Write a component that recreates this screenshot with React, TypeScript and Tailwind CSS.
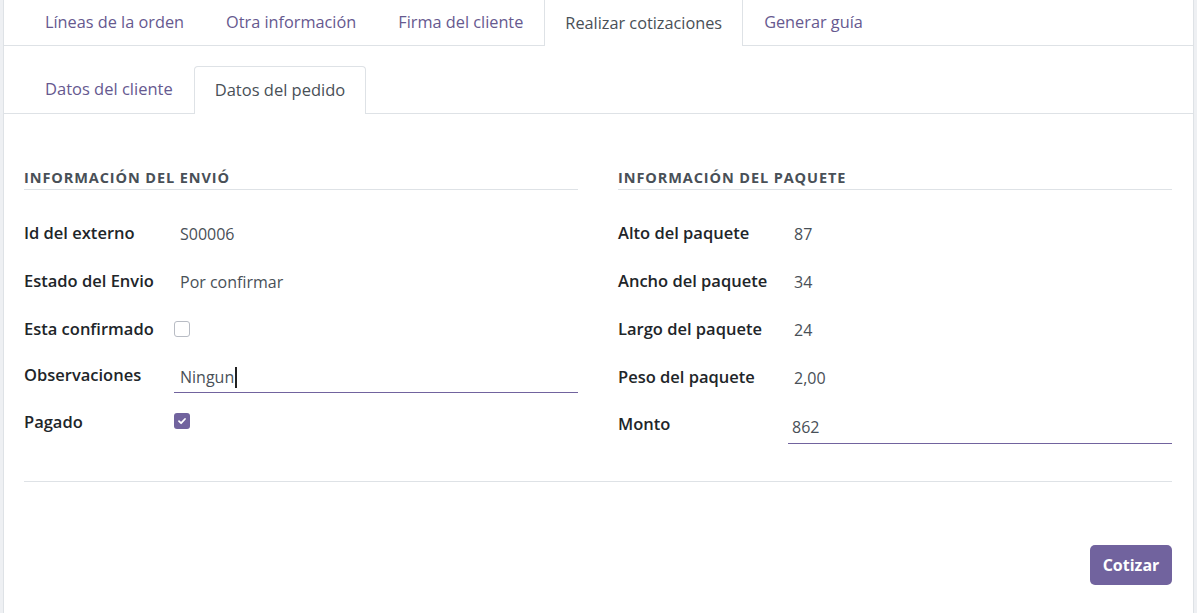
import React from "react";

const FONT = { fontFamily: '"Open Sans", "Noto Sans", sans-serif' };

function Check() {
  return (
    <span className="flex h-4 w-4 items-center justify-center rounded-[3px] bg-[#71639e]">
      <svg width="10" height="10" viewBox="0 0 10 10" fill="none">
        <path d="M2 5.2 L4.1 7.2 L8 3" stroke="white" strokeWidth="1.8" strokeLinecap="round" strokeLinejoin="round" />
      </svg>
    </span>
  );
}

function Row({ label, labelW, h = "h-[47.5px]", children }: { label: string; labelW: string; h?: string; children: React.ReactNode }) {
  return (
    <div className={`flex ${h} items-start`}>
      <div className={`${labelW} shrink-0 text-[16.5px] font-semibold leading-6 text-[#212529]`}>{label}</div>
      <div className="flex-1">{children}</div>
    </div>
  );
}

function Value({ children }: { children: React.ReactNode }) {
  return <div className="pl-[6px] pt-[1px] text-[16px] leading-6 text-[#495057]">{children}</div>;
}

export default function App() {
  const topTabs = ["Líneas de la orden", "Otra información", "Firma del cliente", "Realizar cotizaciones", "Generar guía"];
  return (
    <div className="h-[613px] w-[1197px] overflow-hidden bg-[#eef0f3] px-[3px]" style={FONT}>
      <div className="h-full border-x border-[#dee2e6] bg-white">
        {/* top tabs */}
        <div className="flex h-[46px] border-b border-[#dee2e6] pl-[20px]">
          {topTabs.map((t) => {
            const active = t === "Realizar cotizaciones";
            return (
              <div
                key={t}
                className={
                  active
                    ? "-mb-px flex h-[46px] items-center border-x border-[#dee2e6] bg-white px-5 text-[16.3px] text-[#495057]"
                    : "flex h-[45px] items-center border-x border-transparent px-5 text-[16.3px] text-[#66598f]"
                }
              >
                {t}
              </div>
            );
          })}
        </div>

        {/* sub tabs */}
        <div className="flex h-[68px] items-end border-b border-[#dee2e6] pl-[20px]">
          <div className="flex h-[47px] items-center border border-transparent px-5 text-[16.5px] text-[#66598f]">
            Datos del cliente
          </div>
          <div className="-mb-px flex h-[48px] items-center rounded-t-[4px] border border-b-0 border-[#dee2e6] bg-white px-5 text-[16.5px] text-[#495057]">
            Datos del pedido
          </div>
        </div>

        <div className="pl-[20px] pr-[21px] pt-[54px]">
          <div className="grid grid-cols-2 gap-10">
            {/* left */}
            <div>
              <div className="border-b border-[#dee2e6] pb-[1px] text-[14.5px] font-bold uppercase leading-5 tracking-[0.9px] text-[#495057]">
                Información del envió
              </div>
              <div className="pt-[31px]">
                <Row label="Id del externo" labelW="w-[150px]" h="h-[48px]">
                  <Value>S00006</Value>
                </Row>
                <Row label="Estado del Envio" labelW="w-[150px]" h="h-[48px]">
                  <Value>Por confirmar</Value>
                </Row>
                <Row label="Esta confirmado" labelW="w-[150px]" h="h-[46px]">
                  <div className="pt-[4px]">
                    <span className="block h-4 w-4 rounded-[3px] border border-[#b8bcc4] bg-white" />
                  </div>
                </Row>
                <Row label="Observaciones" labelW="w-[150px]" h="h-[47px]">
                  <div className="flex items-center border-b border-[#71639e] pb-[3px] pl-[6px] pt-[2px] text-[16px] leading-6 text-[#495057]">
                    Ningun
                    <span className="ml-[1px] inline-block h-[21px] w-[2px] bg-[#222]" />
                  </div>
                </Row>
                <Row label="Pagado" labelW="w-[150px]">
                  <div className="pt-[3px]">
                    <Check />
                  </div>
                </Row>
              </div>
            </div>

            {/* right */}
            <div>
              <div className="border-b border-[#dee2e6] pb-[1px] text-[14.5px] font-bold uppercase leading-5 tracking-[0.9px] text-[#495057]">
                Información del paquete
              </div>
              <div className="pt-[31px]">
                <Row label="Alto del paquete" labelW="w-[170px]" h="h-[48px]">
                  <Value>87</Value>
                </Row>
                <Row label="Ancho del paquete" labelW="w-[170px]" h="h-[48px]">
                  <Value>34</Value>
                </Row>
                <Row label="Largo del paquete" labelW="w-[170px]" h="h-[48px]">
                  <Value>24</Value>
                </Row>
                <Row label="Peso del paquete" labelW="w-[170px]" h="h-[47px]">
                  <Value>2,00</Value>
                </Row>
                <Row label="Monto" labelW="w-[170px]">
                  <div className="border-b border-[#71639e] pb-[4px] pl-[4px] pt-[3px] text-[16px] leading-6 text-[#495057]">862</div>
                </Row>
              </div>
            </div>
          </div>

          <div className="mt-[21px] border-t border-[#dee2e6]" />

          <div className="flex justify-end pt-[63px]">
            <button className="h-[40px] w-[82px] rounded-[5px] bg-[#71639e] text-[16px] font-bold text-white">Cotizar</button>
          </div>
        </div>
      </div>
    </div>
  );
}
